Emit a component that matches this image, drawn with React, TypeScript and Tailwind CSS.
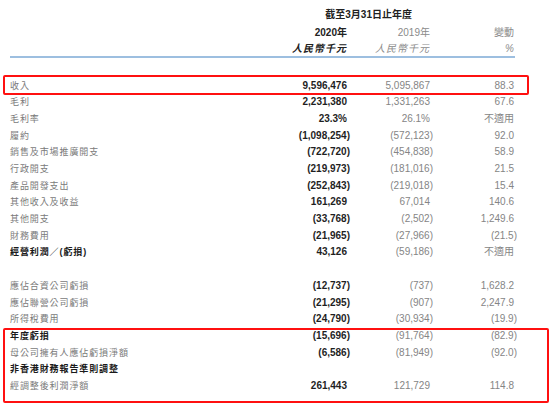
import React from "react";

type Row = {
  label: string;
  values?: [string, string, string];
  strong?: boolean;
};

const ROWS: Row[] = [
  { label: "收入", values: ["9,596,476", "5,095,867", "88.3"] },
  { label: "毛利", values: ["2,231,380", "1,331,263", "67.6"] },
  { label: "毛利率", values: ["23.3%", "26.1%", "不適用"] },
  { label: "履約", values: ["(1,098,254)", "(572,123)", "92.0"] },
  { label: "銷售及市場推廣開支", values: ["(722,720)", "(454,838)", "58.9"] },
  { label: "行政開支", values: ["(219,973)", "(181,016)", "21.5"] },
  { label: "產品開發支出", values: ["(252,843)", "(219,018)", "15.4"] },
  { label: "其他收入及收益", values: ["161,269", "67,014", "140.6"] },
  { label: "其他開支", values: ["(33,768)", "(2,502)", "1,249.6"] },
  { label: "財務費用", values: ["(21,965)", "(27,966)", "(21.5)"] },
  { label: "經營利潤／(虧損)", values: ["43,126", "(59,186)", "不適用"], strong: true },
  { label: "" },
  { label: "應佔合資公司虧損", values: ["(12,737)", "(737)", "1,628.2"] },
  { label: "應佔聯營公司虧損", values: ["(21,295)", "(907)", "2,247.9"] },
  { label: "所得稅費用", values: ["(24,790)", "(30,934)", "(19.9)"] },
  { label: "年度虧損", values: ["(15,696)", "(91,764)", "(82.9)"], strong: true },
  { label: "母公司擁有人應佔虧損淨額", values: ["(6,586)", "(81,949)", "(92.0)"] },
  { label: "非香港財務報告準則調整", strong: true },
  { label: "經調整後利潤淨額", values: ["261,443", "121,729", "114.8"] },
];

// negative figures hang their closing bracket past the column edge
function Figure({ value }: { value: string }) {
  const neg = value.endsWith(")");
  return <span className={neg ? "" : "pr-[3px]"}>{value}</span>;
}

export default function App() {
  return (
    <div
      className="relative h-[407px] w-[550px] overflow-hidden bg-white text-[10px]"
      style={{ fontFamily: '"Liberation Sans", "Noto Sans CJK TC", sans-serif' }}
    >
      {/* column headings */}
      <div className="pt-[6px] pr-[33px] pl-[10px]">
        <div className="flex h-[18px] items-center justify-end pr-[105px] leading-[18px] font-bold text-[#222]">
          截至3月31日止年度
        </div>
        <div className="flex h-[18px] items-center leading-[18px]">
          <div className="flex-1" />
          <div className="w-[120px] pr-[3px] text-right font-bold text-[#222]">2020年</div>
          <div className="w-[83px] pr-[3px] text-right text-[#8a8a8a]">2019年</div>
          <div className="w-[84px] pr-[3px] text-right text-[#8a8a8a]">變動</div>
        </div>
        <div className="flex h-[14px] items-center leading-[14px] italic">
          <div className="flex-1" />
          <div className="w-[120px] pr-[3px] text-right font-bold tracking-[1px] text-[#222]">人民幣千元</div>
          <div className="w-[83px] pr-[3px] text-right tracking-[1px] text-[#8a8a8a]">人民幣千元</div>
          <div className="w-[84px] pr-[3px] text-right text-[#8a8a8a]">%</div>
        </div>
        <div className="h-[2px] w-[505px] bg-[#9dbfe0]" />
      </div>

      {/* statement rows */}
      <div className="mt-[19.6px] pr-[33px] pl-[10px]">
        {ROWS.map((row, i) => (
          <div key={i} className="flex h-[16.7px] items-center leading-[16.7px]">
            <div
              className={
                row.strong
                  ? "flex-1 text-[9px] font-bold tracking-[0.9px] text-[#1a1a1a]"
                  : "flex-1 text-[9px] tracking-[0.9px] text-[#7a7a7a]"
              }
            >
              {row.label}
            </div>
            {row.values && (
              <>
                <div className="w-[120px] text-right font-bold text-[#1f1f1f]">
                  <Figure value={row.values[0]} />
                </div>
                <div className="w-[83px] text-right text-[#858585]">
                  <Figure value={row.values[1]} />
                </div>
                <div className="w-[84px] text-right text-[#858585]">
                  <Figure value={row.values[2]} />
                </div>
              </>
            )}
          </div>
        ))}
      </div>

      {/* red highlight annotations */}
      <div className="pointer-events-none absolute top-[75px] left-[3px] h-[20px] w-[526px] rounded-[2px] border-2 border-[#ff1010]" />
      <div className="pointer-events-none absolute top-[328px] left-[3px] h-[75px] w-[546px] rounded-[2px] border-2 border-[#ff1010]" />
    </div>
  );
}
